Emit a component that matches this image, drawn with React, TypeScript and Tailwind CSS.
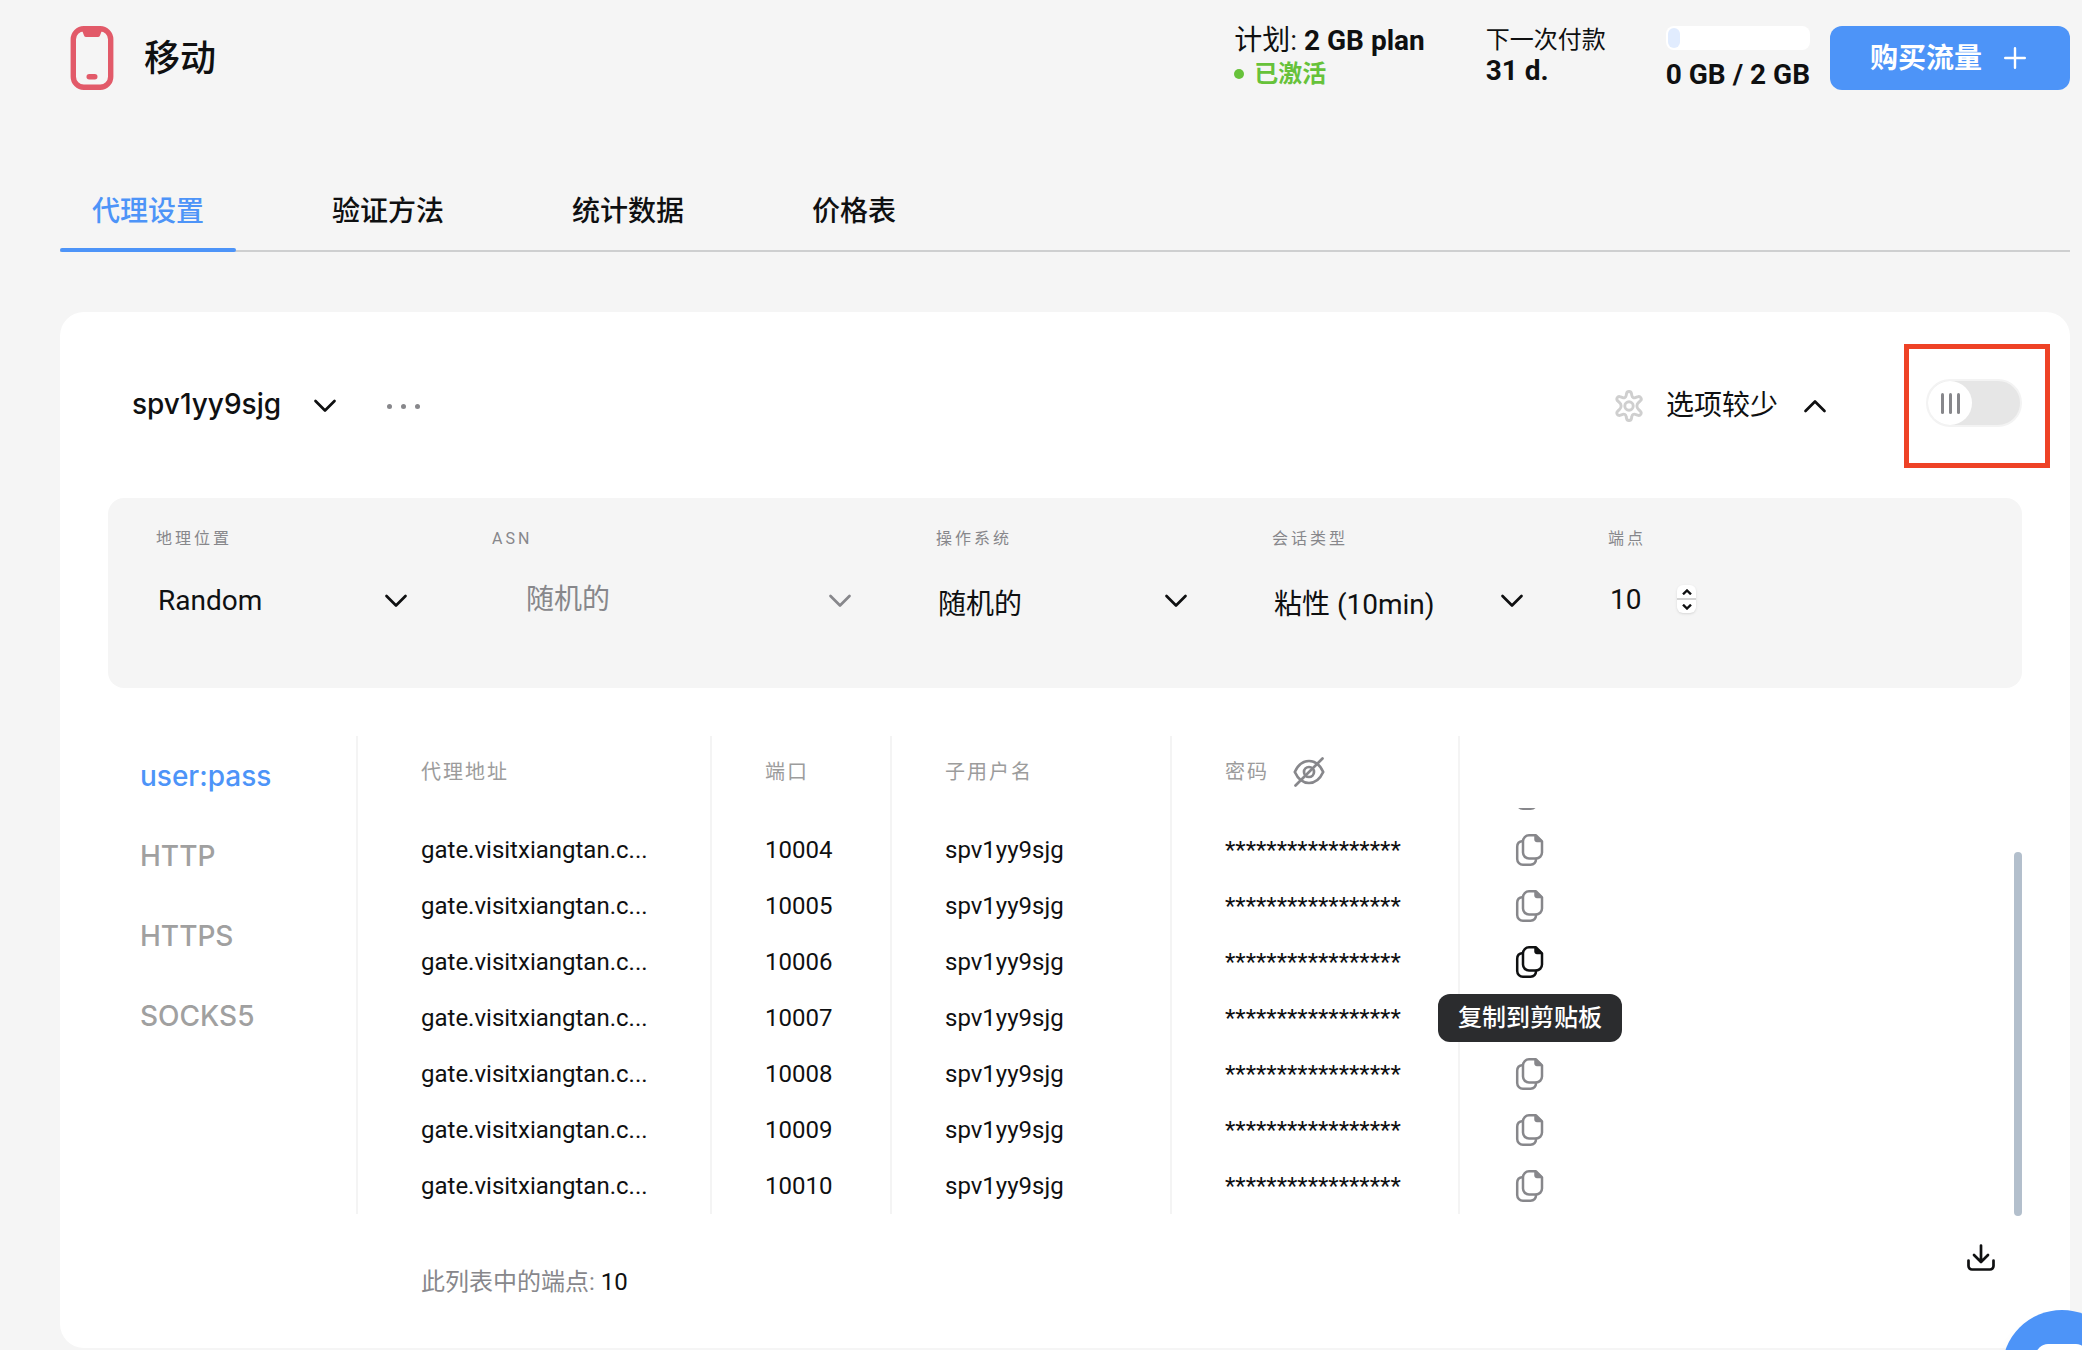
import React from "react";

type IconProps = { className?: string };

const Chevron = ({ className = "" }: IconProps) => (
  <svg viewBox="0 0 24 14" className={"h-[14px] w-6 shrink-0 " + className} fill="none" stroke="currentColor" strokeWidth="2.7" strokeLinecap="round" strokeLinejoin="round" aria-hidden="true">
    <path d="M2.500 2 12 11.500 21.500 2" />
  </svg>
);

const PhoneIcon = () => (
  <svg viewBox="0 0 44 64" className="h-16 w-11 shrink-0" fill="none" aria-hidden="true">
    <rect x="3.3" y="2.8" width="37.4" height="58.4" rx="10.5" stroke="#e25a69" strokeWidth="5.4" />
    <path d="M12.500 3H31.500V5.500L30 9.500Q29.500 11 27.800 11H16.200Q14.500 11 14 9.500L12.500 5.500Z" fill="#e25a69" />
    <rect x="16.500" y="48" width="11" height="5.400" rx="2.700" fill="#e25a69" />
  </svg>
);

const GearIcon = () => (
  <svg viewBox="0 0 32 32" className="size-8 shrink-0 text-[#cfcfcf]" fill="none" stroke="currentColor" strokeWidth="2.900" strokeLinejoin="round" aria-hidden="true">
    <path d="M13.600 3.400a2.450 2.450 0 0 1 4.800 0l.5 2.300a2.450 2.450 0 0 0 3.400 2l2.100-.800a2.450 2.450 0 0 1 2.600 4.200l-1.600 1.600a4.400 4.400 0 0 0 0 6.600l1.600 1.600a2.450 2.450 0 0 1-2.600 4.200l-2.100-.800a2.450 2.450 0 0 0-3.400 2l-.5 2.300a2.450 2.450 0 0 1-4.800 0l-.5-2.300a2.450 2.450 0 0 0-3.400-2l-2.100.800a2.450 2.450 0 0 1-2.600-4.200l1.600-1.600a4.400 4.400 0 0 0 0-6.600l-1.600-1.600a2.450 2.450 0 0 1 2.600-4.200l2.100.800a2.450 2.450 0 0 0 3.400-2z" />
    <circle cx="16" cy="16" r="4.200" />
  </svg>
);

const EyeOffIcon = () => (
  <svg viewBox="0 0 32 32" className="size-8" fill="none" stroke="currentColor" strokeWidth="2.700" strokeLinecap="round" strokeLinejoin="round" aria-hidden="true">
    <path d="M1.800 16C5 9 10 5 16 5s11 4 14.200 11C27 23 22 27 16 27S5 23 1.800 16Z" />
    <circle cx="16" cy="16" r="5" />
    <path d="M2.500 29.500 29.500 2.500" />
  </svg>
);

const CopyIcon = () => (
  <svg viewBox="0 0 32 32" className="size-8" fill="none" stroke="currentColor" strokeWidth="2.500" strokeLinecap="round" strokeLinejoin="round" aria-hidden="true">
    <path d="M15 1.300h7l6 6V18.500a6 6 0 0 1-6 6h-7a6 6 0 0 1-6-6V7.300a6 6 0 0 1 6-6Z" />
    <path d="M8.800 7C5.400 7.300 3.200 9.300 3.200 12.800V25a5.700 5.700 0 0 0 5.800 5.700h7.500c3.300 0 5.400-2.300 5.700-6" />
    <path d="M21.500 2V5.500a1.500 1.500 0 0 0 1.500 1.500h4Z" fill="currentColor" />
  </svg>
);

const DownloadIcon = () => (
  <svg viewBox="0 0 32 32" className="size-8" fill="none" stroke="currentColor" strokeWidth="2.700" strokeLinecap="round" strokeLinejoin="round" aria-hidden="true">
    <path d="M16 4.500V20M9 14l7 7 7-7M3.500 19.500V25a3.500 3.500 0 0 0 3.500 3.500h18a3.500 3.500 0 0 0 3.500-3.500v-5.500" />
  </svg>
);

const tabs = ["代理设置", "验证方法", "统计数据", "价格表"];
const protocols = ["user:pass", "HTTP", "HTTPS", "SOCKS5"];
const ports = Array.from({ length: 7 }, (_, i) => 10004 + i);
const activePort = 10006;

type FieldProps = {
  id: string;
  label: string;
  value: string;
  width: string;
  inset?: string;
  muted?: boolean;
};

function SelectField({ id, label, value, width, inset = "pl-0.5", muted = false }: FieldProps) {
  return (
    <div className={"flex flex-col gap-[34px] " + width}>
      <label htmlFor={id} className="text-base leading-4 tracking-[3px] text-[#87878b]">
        {label}
      </label>
      <div className={"grid items-center " + (muted ? "text-[#87878b]" : "text-[#0f1011]")}>
        <select
          id={id}
          defaultValue={value}
          className={"col-start-1 row-start-1 h-10 w-full appearance-none bg-transparent pr-10 text-[28px] leading-8 outline-none " + inset}
        >
          <option>{value}</option>
        </select>
        <Chevron className="pointer-events-none col-start-1 row-start-1 justify-self-end" />
      </div>
    </div>
  );
}

export default function App() {
  return (
    <div lang="zh-CN" className="min-h-screen bg-[#f5f5f5] pr-3 pl-[60px] font-[Roboto,'Noto_Sans_CJK_SC',sans-serif] text-[#0f1011]">
      <header className="flex items-start pt-[26px]">
        <div className="flex flex-1 items-center gap-[30px] pl-2.5">
          <PhoneIcon />
          <h1 className="pt-0.5 text-4xl leading-[60px] font-medium">移动</h1>
        </div>
        <div className="mr-[61px] flex flex-col">
          <p className="text-[28px] leading-[30px]">
            计划: <strong className="font-bold">2 GB plan</strong>
          </p>
          <p className="mt-0.5 flex items-center gap-2.5 text-2xl leading-8 font-bold text-[#67c23a]">
            <span className="size-2.5 rounded-full bg-[#67c23a]" />
            已激活
          </p>
        </div>
        <div className="mr-[60px] flex flex-col">
          <p className="text-2xl leading-7">下一次付款</p>
          <p className="text-[28px] leading-[34px] font-bold">31 d.</p>
        </div>
        <div className="mr-5 flex flex-col gap-2">
          <div className="h-6 rounded-lg bg-white p-0.5" role="progressbar" aria-label="流量" aria-valuenow={0} aria-valuemin={0} aria-valuemax={2}>
            <div className="h-full w-3 rounded-md bg-[#e1ecfe]" />
          </div>
          <p className="text-[28px] leading-[34px] font-bold">0 GB / 2 GB</p>
        </div>
        <button type="button" className="flex h-16 w-60 items-center justify-center gap-[22px] rounded-xl bg-[#4d94f8] pr-1 text-[28px] font-bold text-white">
          <span className="pt-0.5">购买流量</span>
          <svg viewBox="0 0 22 22" className="size-[22px]" stroke="currentColor" strokeWidth="2.400" strokeLinecap="round" aria-hidden="true">
            <path d="M11 1.200v19.600M1.200 11h19.600" />
          </svg>
        </button>
      </header>

      <nav className="mt-20 flex h-20 gap-16 border-b-2 border-[#cecfd0]">
        {tabs.map((tab, i) => (
          <a
            key={tab}
            href="#"
            className={
              "-mb-0.5 flex items-center justify-center px-8 text-[28px] font-medium " +
              (i === 0 ? "relative text-[#4d94f8] after:absolute after:inset-x-0 after:bottom-0 after:h-1 after:rounded-full after:bg-[#4d94f8]" : "")
            }
          >
            {tab}
          </a>
        ))}
      </nav>

      <main className="mt-[60px] rounded-3xl bg-white px-12 pt-8 pb-[50px]">
        <div className="flex items-center">
          <button type="button" className="flex items-center gap-8 pl-6 font-[Inter,sans-serif] text-[28px] leading-[60px] font-medium">
            <span className="pb-1">spv1yy9sjg</span>
            <Chevron />
          </button>
          <button type="button" aria-label="更多" className="ml-[50px] flex h-8 items-center gap-[9px]">
            <span className="size-[5px] rounded-full bg-[#87878b]" />
            <span className="size-[5px] rounded-full bg-[#87878b]" />
            <span className="size-[5px] rounded-full bg-[#87878b]" />
          </button>
          <button type="button" className="mr-[77px] ml-auto flex items-center text-[28px]">
            <GearIcon />
            <span className="ml-[21px]">选项较少</span>
            <Chevron className="ml-[25px] rotate-180" />
          </button>
          <div className="-mr-7 flex h-[124px] w-[146px] items-center justify-center border-[5px] border-[#ee4226] pr-1.5 pb-1.5">
            <button type="button" role="switch" aria-checked="false" aria-label="切换" className="h-12 w-24 rounded-full border-2 border-[#f3f3f3] bg-[#e6e6e6]">
              <span className="flex size-11 items-center justify-center gap-[5px] rounded-full bg-white">
                <span className="h-[21px] w-[3px] rounded-full bg-[#87878b]" />
                <span className="h-[21px] w-[3px] rounded-full bg-[#87878b]" />
                <span className="h-[21px] w-[3px] rounded-full bg-[#87878b]" />
              </span>
            </button>
          </div>
        </div>

        <section className="mt-[30px] flex h-[190px] gap-[84px] rounded-2xl bg-[#f5f5f5] px-12 pt-[33px]">
          <SelectField id="location" label="地理位置" value="Random" width="w-[252px]" />
          <SelectField id="asn" label="ASN" value="随机的" width="w-[360px]" inset="pl-[34px] pb-0.5" muted />
          <SelectField id="os" label="操作系统" value="随机的" width="w-[252px]" inset="pl-0.5 pt-2" />
          <SelectField id="session" label="会话类型" value="粘性 (10min)" width="w-[252px]" inset="pl-0.5 pt-2" />
          <div className="flex flex-col gap-8">
            <label htmlFor="endpoints" className="text-base leading-4 tracking-[3px] text-[#87878b]">
              端点
            </label>
            <div className="flex items-center">
              <input id="endpoints" type="text" inputMode="numeric" defaultValue="10" className="h-10 w-[69px] bg-transparent pl-0.5 text-[28px] leading-8 outline-none" />
              <div className="flex h-7 w-[19px] flex-col divide-y-2 divide-[#d4d4d4] overflow-hidden rounded-md bg-white shadow">
                <button type="button" aria-label="增加" className="flex flex-1 items-center justify-center">
                  <svg viewBox="0 0 10 6" className="h-1.5 w-2.5" fill="none" stroke="currentColor" strokeWidth="2.400"><path d="M1 5.300 5 1.500l4 3.800" /></svg>
                </button>
                <button type="button" aria-label="减少" className="flex flex-1 items-center justify-center">
                  <svg viewBox="0 0 10 6" className="h-1.5 w-2.5" fill="none" stroke="currentColor" strokeWidth="2.400"><path d="M1 .7 5 4.500 9 .7" /></svg>
                </button>
              </div>
            </div>
          </div>
        </section>

        <section className="mt-12 flex">
          <ul className="flex w-[248px] shrink-0 flex-col pl-8">
            {protocols.map((p, i) => (
              <li key={p}>
                <button
                  type="button"
                  className={"h-20 text-left font-[Inter,sans-serif] text-[28px] font-medium " + (i === 0 ? "text-[#4d94f8]" : "text-[#a0a0a0]")}
                >
                  {p}
                </button>
              </li>
            ))}
          </ul>
          <table className="flex flex-1 flex-col">
            <thead>
              <tr className="flex h-[72px] text-left text-xl leading-7 tracking-[2px] text-[#9c9c9c] *:flex *:items-center *:border-l-2 *:border-[#f4f4f4] *:font-normal">
                <th className="w-[354px] pl-[63px]">代理地址</th>
                <th className="w-[180px] pl-[53px]">端口</th>
                <th className="w-[280px] pl-[53px]">子用户名</th>
                <th className="w-[288px] pl-[53px]">
                  密码
                  <button type="button" aria-label="显示密码" className="ml-6 text-[#87878b]">
                    <EyeOffIcon />
                  </button>
                </th>
                <th className="flex-1" aria-label="操作" />
              </tr>
            </thead>
            <tbody className="flex h-[408px] flex-col text-2xl leading-8">
              <tr className="flex h-3.5 shrink-0 overflow-hidden *:flex *:items-end *:border-l-2 *:border-[#f4f4f4]">
                <td className="w-[354px]" />
                <td className="w-[180px]" />
                <td className="w-[280px]" />
                <td className="w-[288px]" />
                <td className="flex-1 pb-3 pl-[54px] text-[#87878b]">
                  <CopyIcon />
                </td>
              </tr>
              {ports.map((port) => (
                <tr key={port} className="flex h-14 shrink-0 *:flex *:items-center *:border-l-2 *:border-[#f4f4f4]">
                  <td className="w-[354px] pl-[63px]">gate.visitxiangtan.c...</td>
                  <td className="w-[180px] pl-[53px]">{port}</td>
                  <td className="w-[280px] pl-[53px]">spv1yy9sjg</td>
                  <td className="w-[288px] pl-[53px]">*****************</td>
                  <td className="flex-1 pl-[54px]">
                    <div className="relative flex">
                      <button type="button" aria-label="复制到剪贴板" className={port === activePort ? "" : "text-[#87878b]"}>
                        <CopyIcon />
                      </button>
                      {port === activePort && (
                        <div role="tooltip" className="absolute top-12 left-1/2 z-10 flex h-12 w-[184px] -translate-x-1/2 items-center justify-center rounded-xl bg-[#2b2c2e] text-2xl font-medium text-white">
                          复制到剪贴板
                        </div>
                      )}
                    </div>
                  </td>
                </tr>
              ))}
            </tbody>
          </table>
          <div className="h-[364px] w-2 self-end rounded-full bg-[#b3bfcc]" />
        </section>

        <footer className="mt-[25px] flex items-start justify-between pr-[25px] pl-[313px]">
          <p className="pt-[25px] text-2xl leading-8 text-[#87878b]">
            此列表中的端点: <span className="text-[#0f1011]">10</span>
          </p>
          <button type="button" aria-label="下载">
            <DownloadIcon />
          </button>
        </footer>
      </main>

      <button type="button" aria-label="聊天" className="fixed -right-10 -bottom-20 flex size-[120px] items-start justify-center rounded-full bg-[#4d94f8] pt-[34px] shadow-lg">
        <span className="h-12 w-[52px] rounded-xl bg-white" />
      </button>
    </div>
  );
}
